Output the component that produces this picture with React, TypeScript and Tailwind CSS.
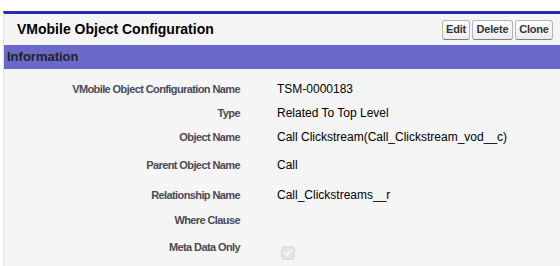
import { Check } from 'lucide-react'

const rows: { label: string; value?: string; h: string; check?: boolean }[] = [
  { label: 'VMobile Object Configuration Name', value: 'TSM-0000183', h: 'h-[24px]' },
  { label: 'Type', value: 'Related To Top Level', h: 'h-[24px]' },
  { label: 'Object Name', value: 'Call Clickstream(Call_Clickstream_vod__c)', h: 'h-[28px]' },
  { label: 'Parent Object Name', value: 'Call', h: 'h-[30px]' },
  { label: 'Relationship Name', value: 'Call_Clickstreams__r', h: 'h-[25px]' },
  { label: 'Where Clause', h: 'h-[27px]' },
  { label: 'Meta Data Only', check: true, h: 'h-[32px]' },
]

const buttons = [
  { text: 'Edit', w: 'w-[28px]' },
  { text: 'Delete', w: 'w-[41px]' },
  { text: 'Clone', w: 'w-[38px]' },
]

export default function App() {
  return (
    <div className="h-[266px] w-[560px] overflow-hidden bg-white pl-[3px] pt-[11px] font-['Liberation_Sans',Arial,sans-serif]">
      <div className="border-l border-t-[3px] border-l-[#e0e3e5] border-t-[#2a2ab2] bg-[#f5f5f5]">
        <div className="flex h-[31px] items-center justify-between pl-[13px] pr-[7px]">
          <h2 className="text-[14px] font-bold text-black">VMobile Object Configuration</h2>
          <div className="flex gap-[2px]">
            {buttons.map((b) => (
              <button
                key={b.text}
                className={`h-[20px] ${b.w} rounded-[3px] border border-[#b5b5b5] border-b-[#7f7f7f] bg-gradient-to-b from-white to-[#ececec] text-center text-[11px] font-bold tracking-[-0.2px] text-[#333]`}
              >
                {b.text}
              </button>
            ))}
          </div>
        </div>
        <div className="flex h-[24px] items-center bg-[#6b69c9] pl-[3px]">
          <h3 className="text-[13px] font-bold text-[#222]">Information</h3>
        </div>
        <div className="pt-[8px]">
          {rows.map((r) => (
            <div key={r.label} className={`flex items-start ${r.h}`}>
              <div className="w-[273px] shrink-0 pt-[4px] pr-[37px] text-right text-[11px] font-bold tracking-[-0.6px] text-[#4a4a56]">
                {r.label}
              </div>
              <div className="pt-[3px] text-[12px] text-black">
                {r.check ? (
                  <span className="mt-[8px] ml-[4px] flex h-[14px] w-[14px] items-center justify-center rounded-[3px] border border-[#d8d8d8] bg-[#e4e4e4]">
                    <Check className="h-[10px] w-[10px] text-white" strokeWidth={3} />
                  </span>
                ) : (
                  r.value
                )}
              </div>
            </div>
          ))}
        </div>
      </div>
    </div>
  )
}
